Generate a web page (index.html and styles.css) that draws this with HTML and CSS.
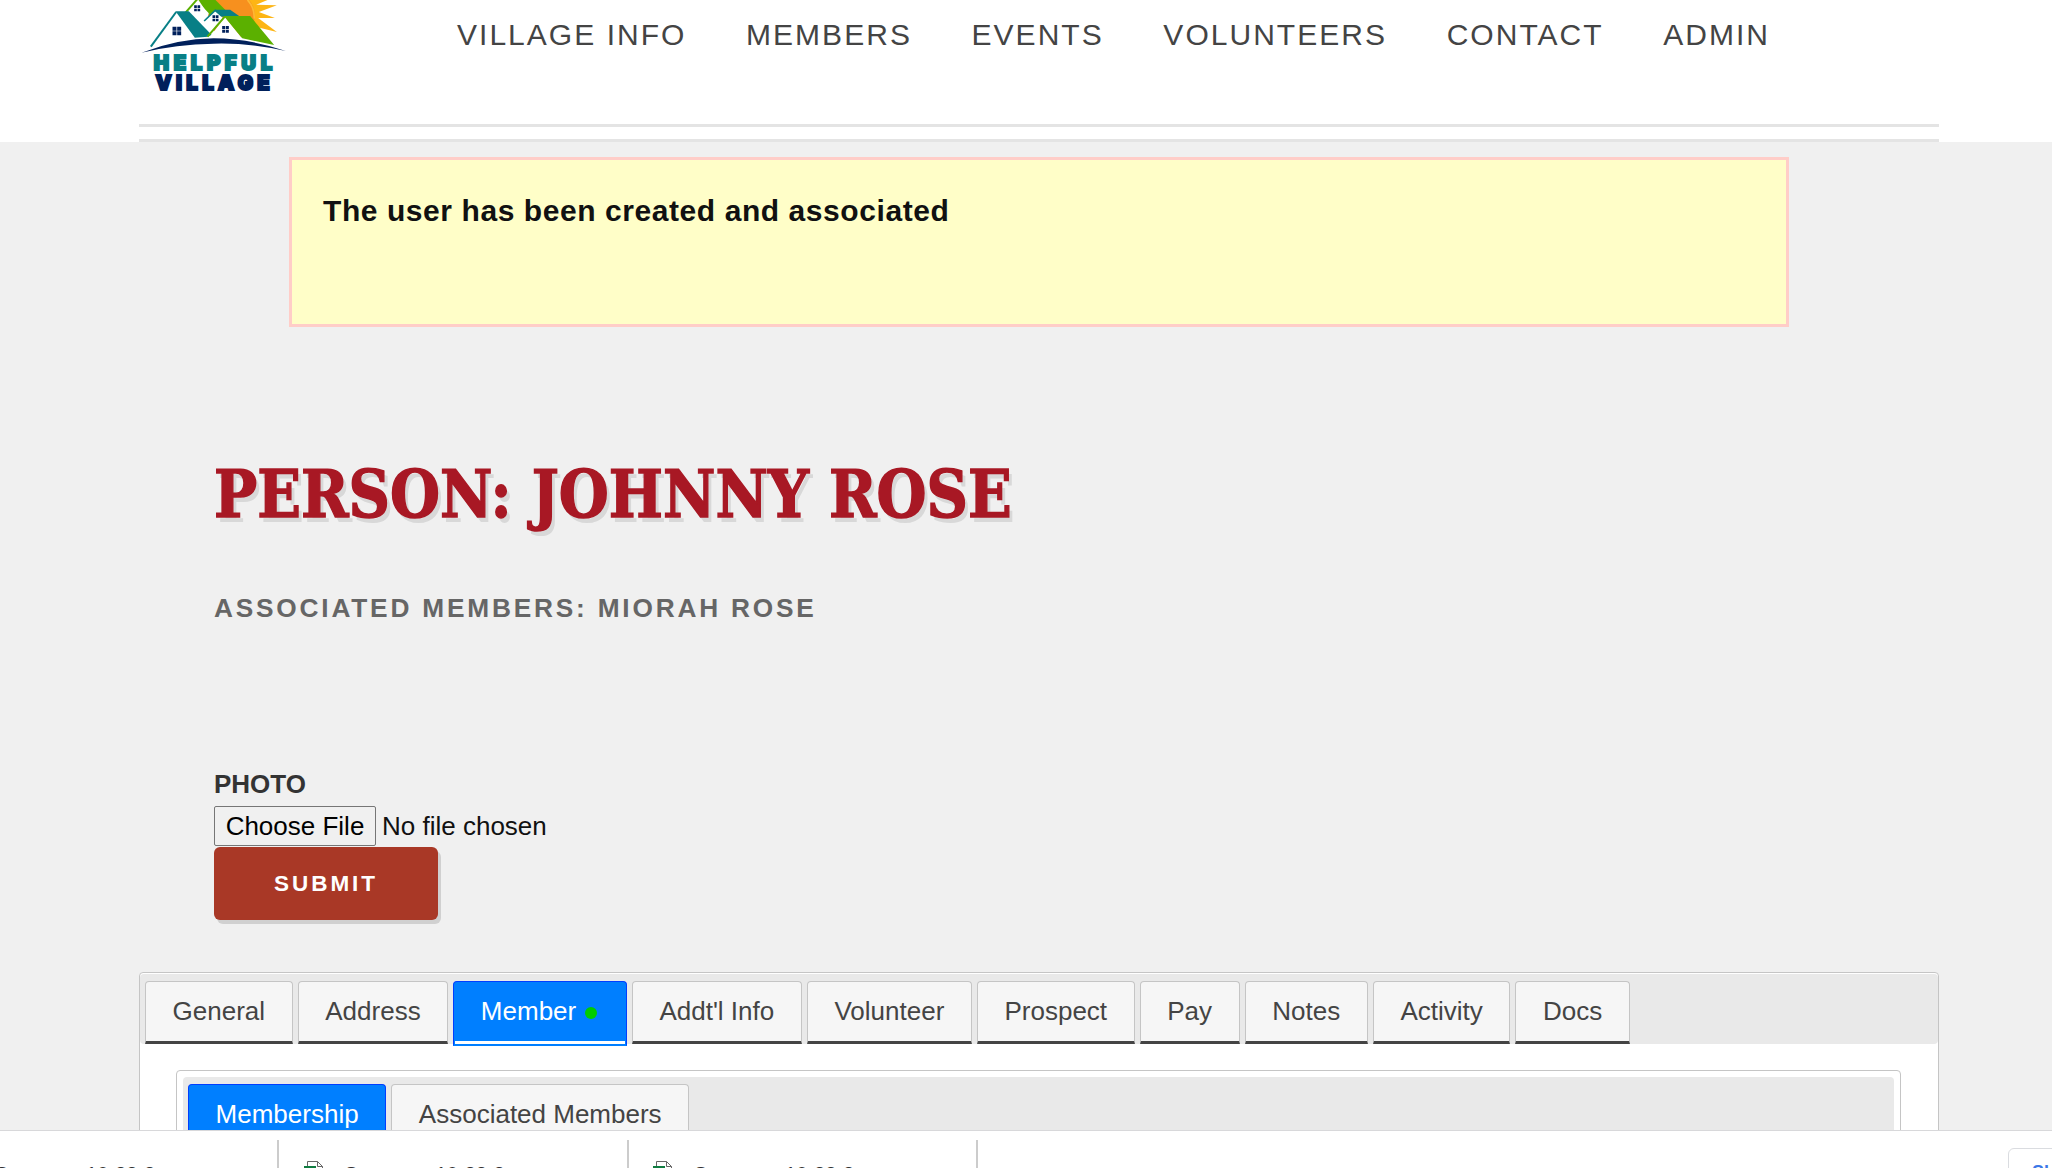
FILE: index.html
```html
<!DOCTYPE html>
<html>
<head>
<meta charset="utf-8">
<title>Person: Johnny Rose</title>
<link rel="stylesheet" href="styles.css">
</head>
<body>

<header class="header">
  <div class="header-row">
    <svg class="logo" viewBox="30 0 440 276">
      <path d="M255 0H398L412 0L378 14L440 16L386 36L434 54L384 54L440 96L376 80L300 60Z" fill="#fdb515"/>
      <circle cx="304" cy="46" r="70" fill="#f7901e"/>
      <path d="M352 0Q374 24 372 56" fill="none" stroke="#fdb933" stroke-width="5"/>
      <path d="M205 0H256L288 32L250 60L225 30Z" fill="#5bb000"/>
      <path d="M166 36L198 0L236 40L222 68L190 110L160 70Z" fill="#fff"/>
      <path d="M166 38L201 -2" stroke="#5bb000" stroke-width="6"/>
      <path d="M255 29H300L330 50H270Z" fill="#087f86"/>
      <path d="M222 62L255 31L278 54L240 100Z" fill="#fff"/>
      <path d="M222 63L255 31L275 48" fill="none" stroke="#087f86" stroke-width="5"/>
      <path d="M62 140L138 35L194 113L240 110L284 50L338 118L430 136L250 118Z" fill="#fff"/>
      <path d="M136 34H176L244 104L234 110L194 113Z" fill="#087f86"/>
      <path d="M62 140L138 36" stroke="#087f86" stroke-width="6"/>
      <path d="M281 48H360L432 135L336 115Z" fill="#5bb000"/>
      <path d="M232 110L284 50" stroke="#5bb000" stroke-width="6"/>
      <g fill="#00205b">
        <path d="M127 80h12v12h-12zM141 80h12v12h-12zM127 94h12v12h-12zM141 94h12v12h-12z"/>
        <path d="M192 16h8v8h-8zM202 16h8v8h-8zM192 26h8v8h-8zM202 26h8v8h-8z"/>
        <path d="M247 46h8v8h-8zM257 46h8v8h-8zM247 56h8v8h-8zM257 56h8v8h-8z"/>
        <path d="M276 78h9v9h-9zM287 78h9v9h-9zM276 89h9v9h-9zM287 89h9v9h-9z"/>
        <path d="M34 158Q145 116 250 115Q360 116 467 153Q360 128 250 131Q140 132 34 158Z"/>
      </g>
      <text class="logo-text logo-teal" x="71" y="210" textLength="355" lengthAdjust="spacing">HELPFUL</text>
      <text class="logo-text logo-navy" x="76" y="269" textLength="343" lengthAdjust="spacing">VILLAGE</text>
    </svg>
    <nav class="main-nav">
      <a>Village Info</a>
      <a>Members</a>
      <a>Events</a>
      <a>Volunteers</a>
      <a>Contact</a>
      <a>Admin</a>
    </nav>
  </div>
  <div class="header-line"></div>
</header>

<div class="alert">The user has been created and associated</div>

<div class="person">
  <h1>Person: Johnny Rose</h1>
  <h3>Associated Members: Miorah Rose</h3>
  <form class="photo-form">
    <label>PHOTO</label>
    <div class="file-row"><span class="file-button">Choose File</span><span>No file chosen</span></div>
    <button type="button" class="submit">Submit</button>
  </form>
</div>

<div class="tabs">
  <div class="tab-nav">
    <a class="tab">General</a>
    <a class="tab">Address</a>
    <a class="tab active">Member<i class="dot"></i></a>
    <a class="tab">Addt'l Info</a>
    <a class="tab">Volunteer</a>
    <a class="tab">Prospect</a>
    <a class="tab">Pay</a>
    <a class="tab">Notes</a>
    <a class="tab">Activity</a>
    <a class="tab">Docs</a>
  </div>
  <div class="sub-tabs">
    <div class="tab-nav">
      <a class="tab active">Membership</a>
      <a class="tab">Associated Members</a>
    </div>
  </div>
</div>

<!-- download shelf -->
<div class="downloads">
  <div class="download"><span>Summary 10-23-2</span></div>
  <div class="download">
    <svg class="file-icon" viewBox="0 0 20 26"><path d="M3.5 25V.5H13.5L18.5 5.5V25M13.5 .5V5.5H18.5" fill="#fff" stroke="#666"/><rect y="5" width="12" height="14" fill="#107c41"/></svg>
    <span>Summary 10-23-2</span>
  </div>
  <div class="download">
    <svg class="file-icon" viewBox="0 0 20 26"><path d="M3.5 25V.5H13.5L18.5 5.5V25M13.5 .5V5.5H18.5" fill="#fff" stroke="#666"/><rect y="5" width="12" height="14" fill="#107c41"/></svg>
    <span>Summary 10-23-2</span>
  </div>
  <div class="show-all">Show all</div>
</div>

</body>
</html>
```
FILE: styles.css
```css
* {
  box-sizing: border-box;
}

html {
  height: 1168px;
  overflow: hidden;
}

body {
  position: relative;
  margin: 0;
  width: 2052px;
  height: 1168px;
  overflow: hidden;
  display: flex;
  flex-direction: column;
  background: #f0f0f0;
  font-family: "Liberation Sans", Arial, sans-serif;
  font-size: 26px;
  color: #111;
}

.header {
  flex: none;
  height: 142px;
  padding: 0 113px 0 139px;
  background: #fff;
}

.header-row {
  display: flex;
  align-items: flex-start;
  height: 127px;
  border-bottom: 3px solid #e4e4e4;
}

.header-line {
  height: 15px;
  border-bottom: 3px solid #e4e4e4;
}

.logo {
  width: 147px;
  height: 92px;
  margin-left: 1px;
}

.logo-text {
  font-family: Inter, sans-serif;
  font-weight: 900;
  font-size: 61px;
  stroke-width: 6px;
}

.logo-teal {
  fill: #087f86;
  stroke: #087f86;
}

.logo-navy {
  fill: #00205b;
  stroke: #00205b;
}

.main-nav {
  display: flex;
  gap: 59.6px;
  margin-left: 170px;
  padding-top: 15px;
  font-size: 30px;
  line-height: 40px;
  letter-spacing: 2.03px;
  text-transform: uppercase;
  white-space: nowrap;
  color: #444;
}

.alert {
  flex: none;
  width: 1500px;
  height: 170px;
  margin: 15px 0 0 289px;
  padding: 33px 31px;
  border: 3px solid #ffcdc8;
  background: #fffec8;
  font-size: 30px;
  font-weight: bold;
  line-height: 36px;
  letter-spacing: 0.57px;
}

.person {
  flex: none;
  height: 645px;
  padding: 127px 0 0 214px;
}

h1 {
  width: max-content;
  margin: 0;
  font-family: "DejaVu Serif", serif;
  font-size: 65px;
  line-height: 80px;
  text-transform: uppercase;
  color: #a81824;
  -webkit-text-stroke: 1.5px #a81824;
  text-shadow: 4px 5px 0 #d8d8d8;
  transform: scaleX(0.883);
  transform-origin: left;
}

h3 {
  margin: 58px 0 0;
  font-size: 26.25px;
  line-height: 32px;
  letter-spacing: 2.8px;
  text-transform: uppercase;
  color: #666;
}

.photo-form {
  display: flex;
  flex-direction: column;
  align-items: flex-start;
  margin-top: 144px;
}

label {
  font-weight: bold;
  line-height: 32px;
  color: #333;
}

.file-row {
  display: flex;
  align-items: center;
  gap: 6px;
  margin-top: 6px;
}

.file-button {
  width: 162px;
  height: 40px;
  border: 1px solid #767676;
  border-radius: 2px;
  line-height: 38px;
  text-align: center;
  color: #000;
}

.submit {
  width: 224px;
  height: 73px;
  margin-top: 1px;
  padding: 0;
  border: none;
  border-radius: 6px;
  background: #a93826;
  box-shadow: 3px 4px 0 #d0d0d0;
  color: #fff;
  font-family: inherit;
  font-size: 22.5px;
  font-weight: bold;
  letter-spacing: 3px;
  text-transform: uppercase;
}

.tabs {
  flex: none;
  width: 1800px;
  height: 240px;
  margin-left: 139px;
  padding-top: 1px;
  border: 1px solid #c5c5c5;
  border-radius: 4px;
  background: #fff;
}

.tab-nav {
  display: flex;
  gap: 5px;
  height: 70px;
  padding: 7px 5px 0;
  border-radius: 4px;
  background: #e9e9e9;
}

.tab {
  height: 63px;
  padding: 0 26.6px;
  border: 1px solid #c5c5c5;
  border-bottom: 3px solid #444;
  border-radius: 4px 4px 0 0;
  background: #f6f6f6;
  line-height: 59px;
  white-space: nowrap;
  color: #444;
}

.tab.active {
  height: 65px;
  border: 1px solid #003eff;
  border-bottom: 2px solid #007fff;
  background: linear-gradient(#fff, #fff) bottom / calc(100% - 2px) 3px no-repeat #007fff;
  color: #fff;
}

.dot {
  display: inline-block;
  width: 12px;
  height: 12px;
  margin: 0 2px 1px 9px;
  border-radius: 50%;
  background: #0c0;
}

.sub-tabs {
  height: 160px;
  margin: 26px 37px 0 36px;
  padding: 6px;
  border: 1px solid #c5c5c5;
  border-radius: 4px;
}

/* stays on the bottom edge of the window, over the page */
.downloads {
  position: absolute;
  left: 0;
  top: 1130px;
  display: flex;
  width: 2052px;
  height: 38px;
  overflow: hidden;
  border-top: 1px solid #d8d8da;
  background: #fff;
  font-size: 20px;
  color: #333;
}

.download {
  flex: none;
  display: flex;
  justify-content: flex-end;
  width: 349.5px;
  height: 60px;
  margin-top: 9px;
  padding: 21px 0 0;
  border-right: 2px solid #ccc;
}

.download:first-child {
  margin-left: -70.5px;
}

.download span {
  width: 282px;
  padding-top: 2px;
}

.file-icon {
  flex: none;
  width: 20px;
  height: 26px;
  margin-right: 21px;
}

.show-all {
  flex: none;
  width: 130px;
  height: 50px;
  margin: 17px 0 0 1030px;
  padding: 13px 0 0 23px;
  border: 1px solid #dadce0;
  border-radius: 6px;
  font-size: 18px;
  font-weight: bold;
  color: #3b78e7;
}
```
